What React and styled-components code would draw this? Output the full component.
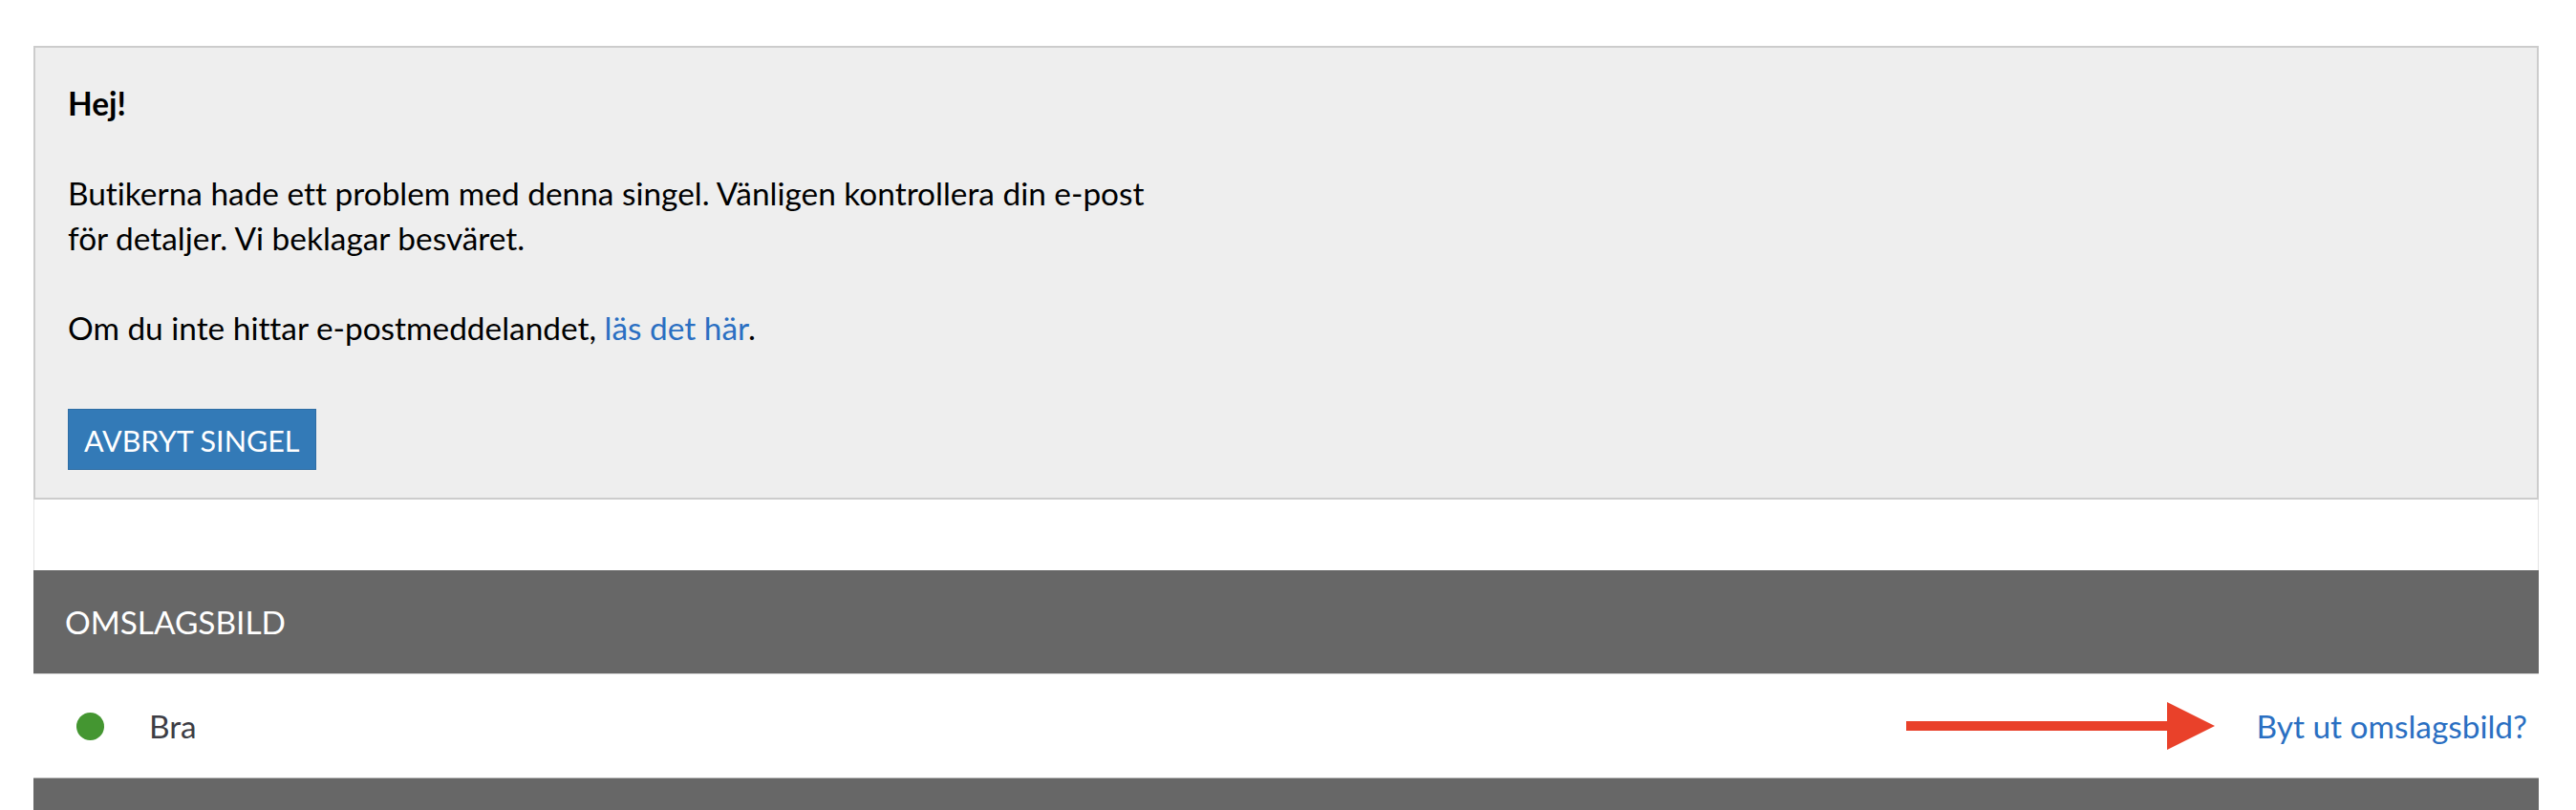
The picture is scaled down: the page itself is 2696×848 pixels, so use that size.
import styled, { createGlobalStyle } from "styled-components";

const GlobalStyle = createGlobalStyle`
  body {
    margin: 0;
    background: #fff;
    font-family: Lato, "Open Sans", "Liberation Sans", sans-serif;
    font-variant-ligatures: none;
  }
`;

const Page = styled.div`
  padding: 48px 39px 0 35px;
  height: 800px;
  overflow: hidden;
`;

const Notice = styled.div`
  background: #eeeeee;
  border: 2px solid #cccccc;
  padding: 35px 34px 29px;
  color: #000;
  font-size: 33.4px;
  line-height: 47px;
`;

const Paragraph = styled.p`
  margin: 0 0 47px;
  max-width: 1150px;
  font-weight: ${(p) => (p.$bold ? 700 : 400)};
`;

const Link = styled.a`
  color: #2a6fc2;
  text-decoration: none;
  cursor: pointer;
`;

/* margin collapses with the paragraph above, so this is the full gap */
const CancelButton = styled.button`
  margin-top: 61px;
  display: block;
  background: #337ab7;
  border: 1px solid #2e6da4;
  color: #fff;
  font-family: inherit;
  font-size: 30.5px;
  line-height: 42px;
  padding: 11px 16px 9px;
  text-transform: uppercase;
  cursor: pointer;
`;

const Spacer = styled.div`
  height: 74px;
  border-left: 1px solid #e4e4e4;
  border-right: 1px solid #e4e4e4;
`;

const SectionHeader = styled.div`
  background: #676767;
  color: #fff;
  height: 108px;
  display: flex;
  align-items: center;
  padding-left: 33px;
  font-size: 33.4px;
  text-transform: uppercase;
  border-bottom: 1px solid #dcdcdc;
`;

const StatusRow = styled.div`
  height: 108px;
  display: flex;
  align-items: center;
  padding: 0 12px 0 45px;
  border-bottom: 1px solid #b5b5b5;
  font-size: 33.4px;
`;

const Dot = styled.span`
  width: 29px;
  height: 29px;
  border-radius: 50%;
  background: ${(p) => p.$color};
  margin-right: 47px;
  flex-shrink: 0;
`;

const StatusText = styled.span`
  color: #3d3d45;
  flex: 1;
`;

const Arrow = styled.svg`
  display: block;
  margin-right: 44px;
`;

export default function App() {
  return (
    <>
      <GlobalStyle />
      <Page>
        <Notice>
          <Paragraph $bold>Hej!</Paragraph>
          <Paragraph>
            Butikerna hade ett problem med denna singel. Vänligen kontrollera
            din e-post för detaljer. Vi beklagar besväret.
          </Paragraph>
          <Paragraph>
            Om du inte hittar e-postmeddelandet, <Link>läs det här</Link>.
          </Paragraph>
          <CancelButton>Avbryt singel</CancelButton>
        </Notice>
        <Spacer />
        <SectionHeader>Omslagsbild</SectionHeader>
        <StatusRow>
          <Dot $color="#449631" />
          <StatusText>Bra</StatusText>
          <Arrow width="323" height="50" viewBox="0 0 323 50">
            <rect x="0" y="20" width="275" height="10" fill="#e9412a" />
            <polygon points="273,0 323,25 273,50" fill="#e9412a" />
          </Arrow>
          <Link>Byt ut omslagsbild?</Link>
        </StatusRow>
        <SectionHeader />
      </Page>
    </>
  );
}
